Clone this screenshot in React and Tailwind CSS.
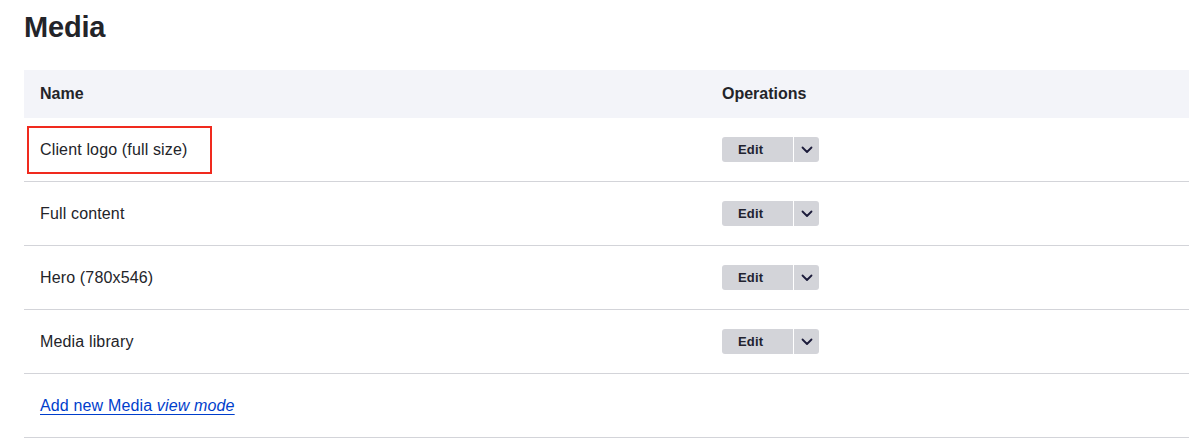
const rows = ["Client logo (full size)", "Full content", "Hero (780x546)", "Media library"];

function Chevron() {
  return (
    <svg viewBox="0 0 12 8" className="h-[8px] w-[12px]" fill="none">
      <path d="M1.5 1.5L6 6L10.5 1.5" stroke="#1b1b3a" strokeWidth="1.8" strokeLinecap="round" strokeLinejoin="round" />
    </svg>
  );
}

function EditButton() {
  return (
    <div className="inline-flex h-[25px] overflow-hidden rounded-[3px] bg-[#d3d4d9]">
      <span className="flex w-[71px] items-center pl-[16px] text-[13px] font-bold text-[#222330]">Edit</span>
      <span className="w-px bg-white" />
      <span className="flex w-[25px] items-center justify-center">
        <Chevron />
      </span>
    </div>
  );
}

export default function App() {
  return (
    <div className="min-h-screen bg-white px-6 pt-[9px] font-['Liberation_Sans',Arial,sans-serif] text-[#232429]">
      <h1 className="mb-[25px] text-[29px] font-bold leading-[36px] tracking-[-0.2px]">Media</h1>
      <div className="w-[1165px]">
        <div className="flex h-12 items-center bg-[#f3f4f9] text-base font-bold">
          <div className="w-[682px] pl-4">Name</div>
          <div className="pl-4">Operations</div>
        </div>
        {rows.map((name, i) => (
          <div key={name} className="flex h-16 items-center border-b border-[#d3d4d9] text-base tracking-[0.15px]">
            <div className="relative flex h-full w-[682px] items-center pl-4 pt-px">
              {i === 0 && (
                <div className="absolute left-[3px] top-[8px] h-[48px] w-[185px] border-2 border-[#f02a1e]" />
              )}
              {name}
            </div>
            <div className="pl-4">
              <EditButton />
            </div>
          </div>
        ))}
        <div className="flex h-16 items-center border-b border-[#d3d4d9] pl-4 pt-px text-base tracking-[0.15px]">
          <a href="#" className="text-[#003ecc] underline underline-offset-[3px]">
            Add new Media <em>view mode</em>
          </a>
        </div>
      </div>
    </div>
  );
}
